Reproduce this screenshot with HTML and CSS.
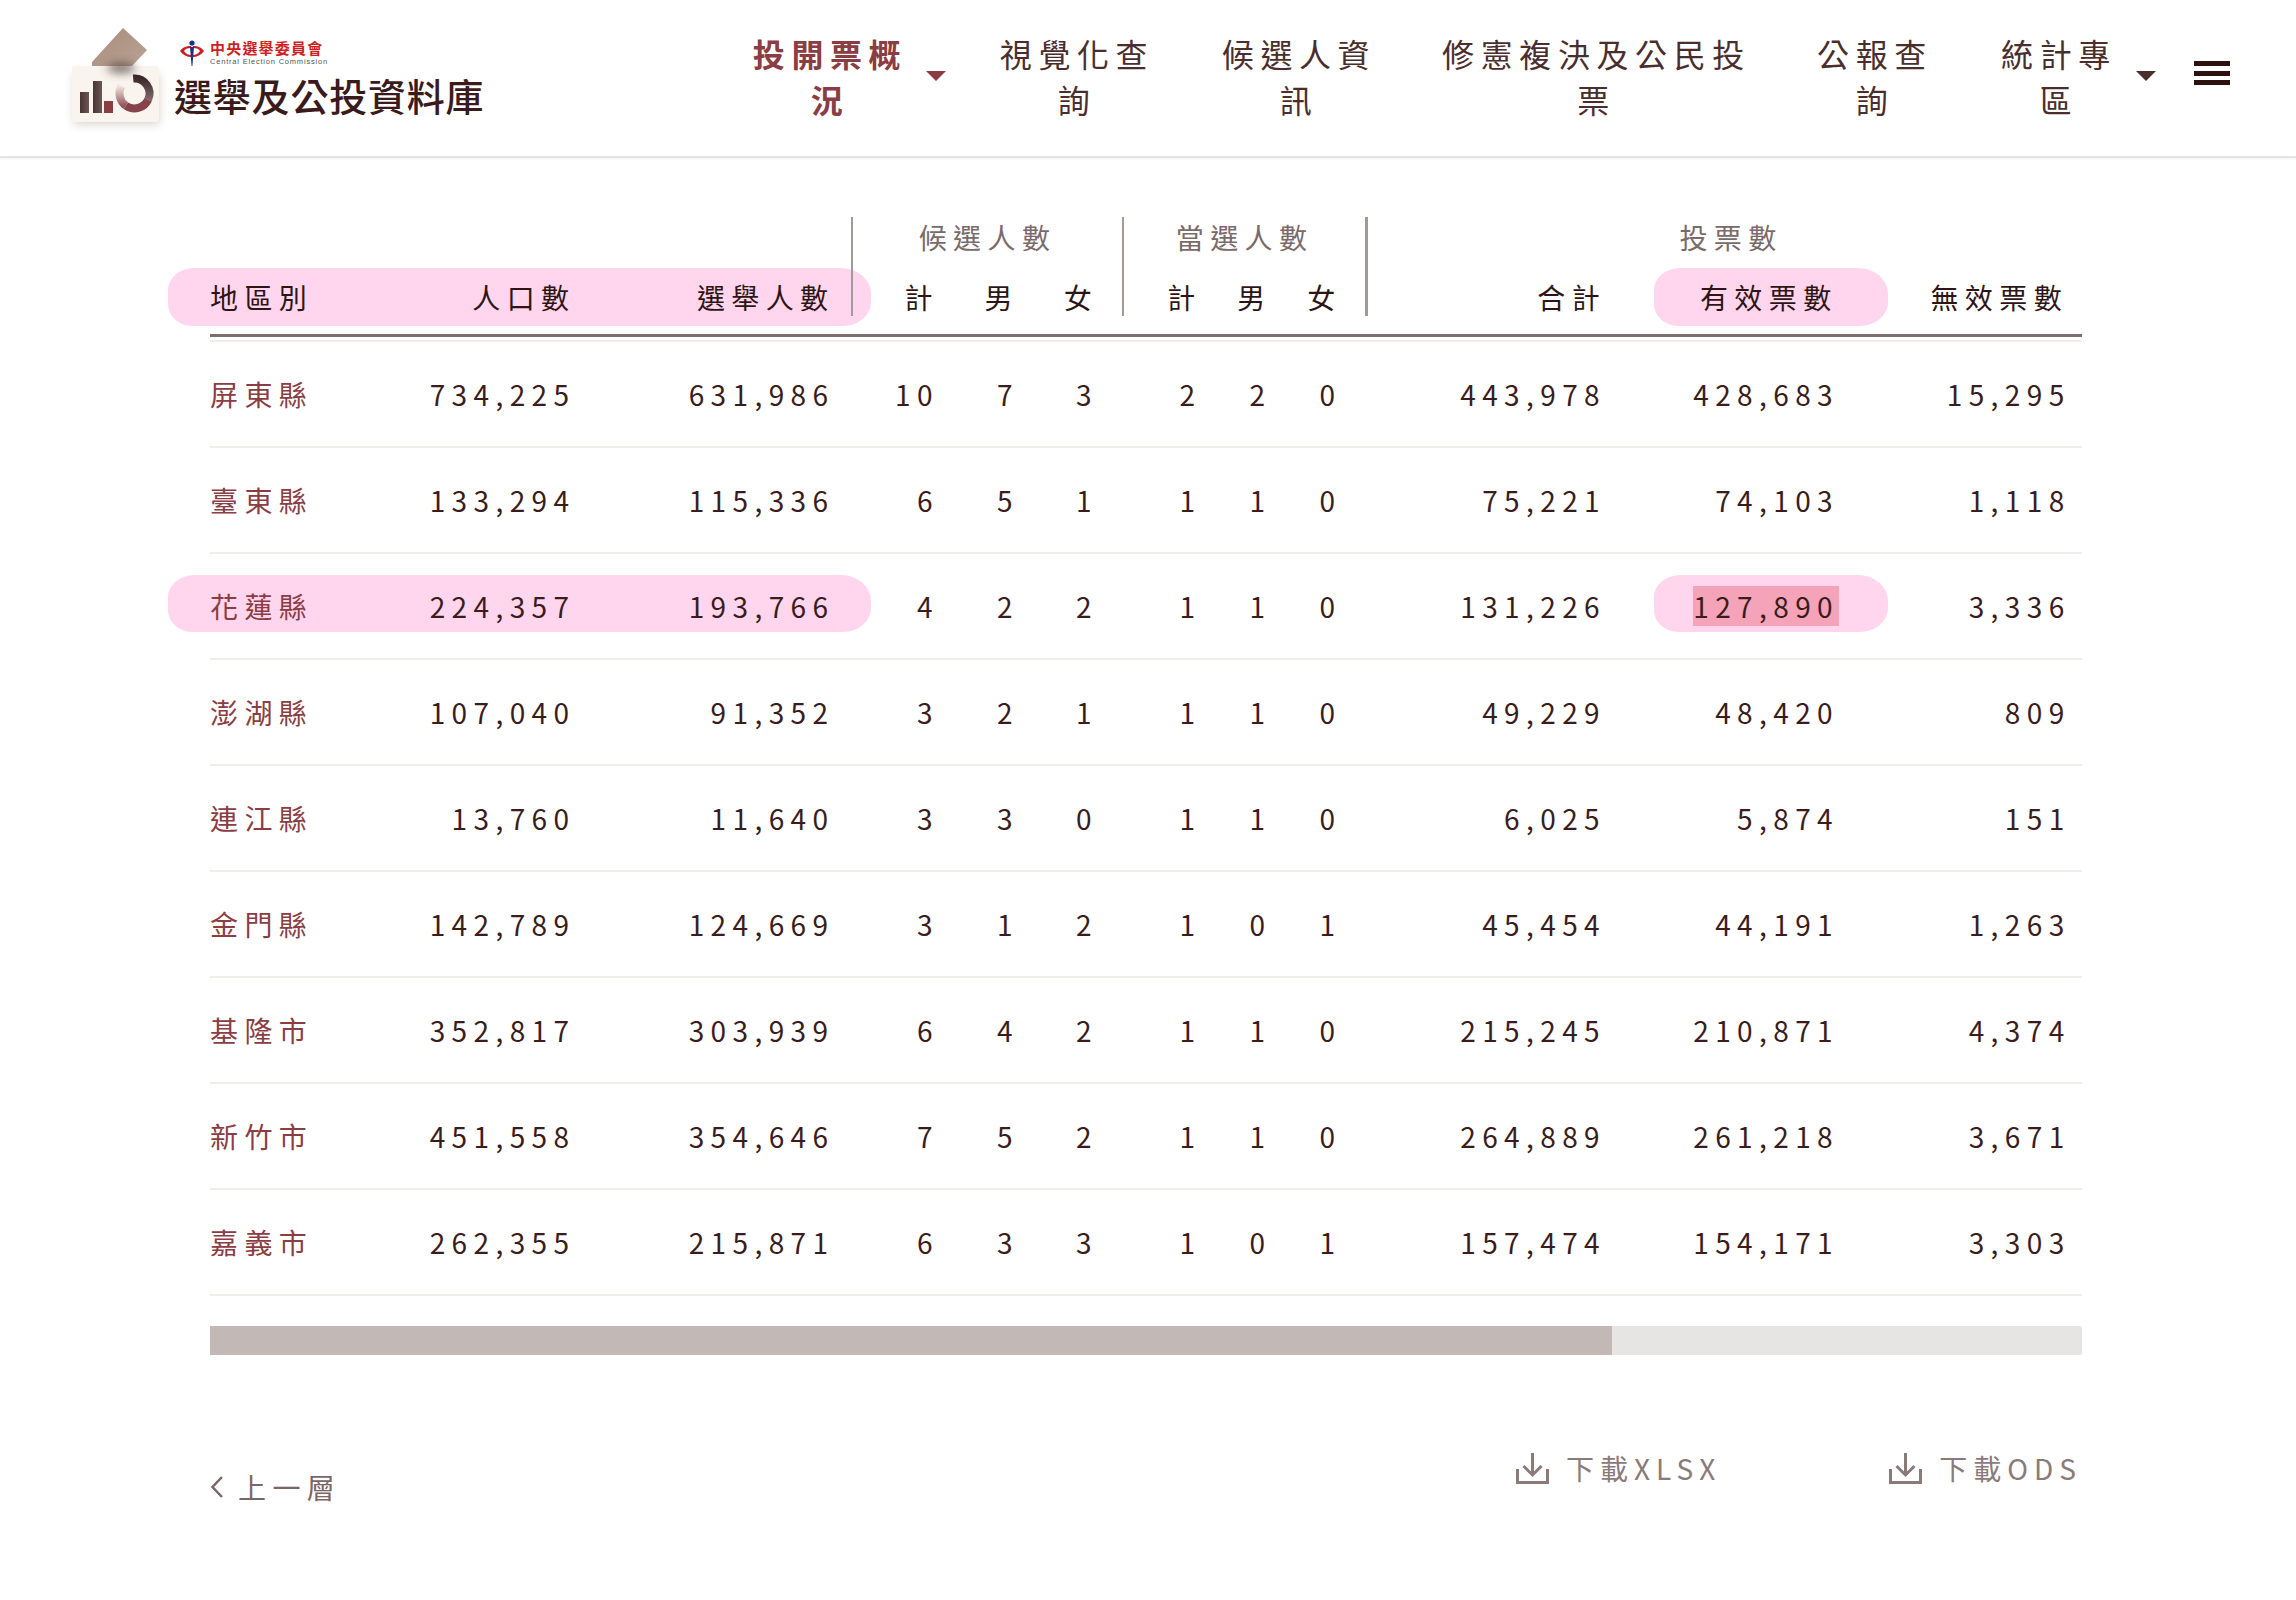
FILE: index.html
```html
<!DOCTYPE html>
<html lang="zh-TW">
<head>
    <meta charset="UTF-8">
    <meta name="viewport" content="width=device-width, initial-scale=1.0">
    <title>選舉及公投資料庫</title>
    <link rel="stylesheet" href="styles.css">
</head>
<body>
    <header class="site-header">
        <a class="logo" href="#">
            <svg class="logo-mark" width="108" height="112" viewBox="0 0 108 112">
                <defs>
                    <filter id="soft" x="-30%" y="-30%" width="160%" height="170%"><feGaussianBlur stdDeviation="5"/></filter>
                    <filter id="softer" x="-50%" y="-80%" width="200%" height="260%"><feGaussianBlur stdDeviation="5"/></filter>
                    <linearGradient id="paper" x1="0" y1="0" x2="1" y2="1">
                        <stop offset="0" stop-color="#a98c7c"/>
                        <stop offset="1" stop-color="#b9a294"/>
                    </linearGradient>
                    <linearGradient id="bar" x1="0" y1="0" x2="1" y2="0">
                        <stop offset="0" stop-color="#4a3535"/>
                        <stop offset="1" stop-color="#6b5656"/>
                    </linearGradient>
                    <linearGradient id="fade" x1="0" y1="1" x2="0" y2="0">
                        <stop offset="0" stop-color="#93555a"/>
                        <stop offset="1" stop-color="#f0e6df"/>
                    </linearGradient>
                    <linearGradient id="ring" x1="0" y1="0" x2="0" y2="1">
                        <stop offset="0" stop-color="#3d2828"/>
                        <stop offset="1" stop-color="#7d6c6c"/>
                    </linearGradient>
                </defs>
                <rect x="8" y="54" width="85" height="50" fill="#8a7a6a" opacity=".35" filter="url(#soft)"/>
                <path d="M57 8 L81 30 L66 46 L26 46 L26 42 Z" fill="url(#paper)"/>
                <rect x="6" y="46" width="87" height="56" rx="3" fill="#f9f4ee"/>
                <ellipse cx="55" cy="48" rx="14" ry="5" fill="#55443f" opacity=".8" filter="url(#softer)"/>
                <rect x="14" y="72" width="9" height="21" fill="url(#bar)"/>
                <rect x="27" y="61" width="9" height="32" fill="url(#bar)"/>
                <rect x="38" y="81" width="9" height="12" fill="#8a3d43"/>
                <path d="M67.200 58.600 A15 15 0 0 1 82.100 79.800" fill="none" stroke="url(#ring)" stroke-width="8"/>
                <path d="M82.100 79.800 A15 15 0 0 1 59.900 85.800" fill="none" stroke="#86444a" stroke-width="8"/>
                <path d="M59.900 85.800 A15 15 0 0 1 55.500 66" fill="none" stroke="url(#fade)" stroke-width="8"/>
            </svg>
            <div class="logo-text">
                <div class="cec">
                    <svg class="cec-mark" width="24" height="26" viewBox="0 0 24 26">
                        <path d="M0 11 C4 6 8 6 11 6 L11 8 C7 8 5 9 4 11 C6 14 9 15 11 15 L11 17 C7 17 3 15 0 11 Z" fill="#cc1f24"/>
                        <path d="M24 11 C20 6 16 6 13 6 L13 8 C17 8 19 9 20 11 C18 14 15 15 13 15 L13 17 C17 17 21 15 24 11 Z" fill="#cc1f24"/>
                        <circle cx="12" cy="3" r="2.600" fill="#1c2f80"/>
                        <path d="M10 7 L14 7 L12.400 26 L11.600 26 Z" fill="#1c2f80"/>
                    </svg>
                    <div class="cec-names">
                        <div class="cec-zh">中央選舉委員會</div>
                        <div class="cec-en">Central Election Commission</div>
                    </div>
                </div>
                <div class="logo-title">選舉及公投資料庫</div>
            </div>
        </a>
        <nav class="main-nav">
            <a class="nav-item active has-caret" href="#"><span class="nav-label w4">投開票概況</span><i class="caret"></i></a>
            <a class="nav-item" href="#"><span class="nav-label w4">視覺化查詢</span></a>
            <a class="nav-item" href="#"><span class="nav-label w4">候選人資訊</span></a>
            <a class="nav-item" href="#"><span class="nav-label w8">修憲複決及公民投票</span></a>
            <a class="nav-item" href="#"><span class="nav-label w3">公報查詢</span></a>
            <a class="nav-item has-caret" href="#"><span class="nav-label w3">統計專區</span><i class="caret"></i></a>
        </nav>
        <button class="burger" type="button" aria-label="選單"><span></span><span></span><span></span></button>
    </header>

    <main class="content">
        <div class="table-wrap">
            <table class="vote-table">
                <colgroup>
                    <col class="c-area">
                    <col class="c-pop">
                    <col class="c-voter">
                    <col class="c-a1">
                    <col class="c-a2">
                    <col class="c-a3">
                    <col class="c-b1">
                    <col class="c-b2">
                    <col class="c-b3">
                    <col class="c-total">
                    <col class="c-valid">
                    <col class="c-invalid">
                </colgroup>
                <thead>
                    <tr class="group-row">
                        <th colspan="3" class="split"></th>
                        <th colspan="3" class="split">候選人數</th>
                        <th colspan="3" class="split split-wide">當選人數</th>
                        <th colspan="3" class="group-votes">投票數</th>
                    </tr>
                    <tr class="col-row">
                        <th class="area pill-left">地區別</th>
                        <th>人口數</th>
                        <th class="end-voter">選舉人數</th>
                        <th>計</th>
                        <th>男</th>
                        <th class="end-a">女</th>
                        <th>計</th>
                        <th>男</th>
                        <th class="end-b">女</th>
                        <th>合計</th>
                        <th class="pill-right">有效票數</th>
                        <th class="end-row">無效票數</th>
                    </tr>
                    <tr class="rule-row"><th colspan="12"></th></tr>
                </thead>
                <tbody>
                    <tr><td class="area">屏東縣</td><td>734,225</td><td class="end-voter">631,986</td><td>10</td><td>7</td><td class="end-a">3</td><td>2</td><td>2</td><td class="end-b">0</td><td>443,978</td><td>428,683</td><td class="end-row">15,295</td></tr>
                    <tr><td class="area">臺東縣</td><td>133,294</td><td class="end-voter">115,336</td><td>6</td><td>5</td><td class="end-a">1</td><td>1</td><td>1</td><td class="end-b">0</td><td>75,221</td><td>74,103</td><td class="end-row">1,118</td></tr>
                    <tr><td class="area pill-left">花蓮縣</td><td>224,357</td><td class="end-voter">193,766</td><td>4</td><td>2</td><td class="end-a">2</td><td>1</td><td>1</td><td class="end-b">0</td><td>131,226</td><td class="pill-right"><span class="picked">127,890</span></td><td class="end-row">3,336</td></tr>
                    <tr><td class="area">澎湖縣</td><td>107,040</td><td class="end-voter">91,352</td><td>3</td><td>2</td><td class="end-a">1</td><td>1</td><td>1</td><td class="end-b">0</td><td>49,229</td><td>48,420</td><td class="end-row">809</td></tr>
                    <tr><td class="area">連江縣</td><td>13,760</td><td class="end-voter">11,640</td><td>3</td><td>3</td><td class="end-a">0</td><td>1</td><td>1</td><td class="end-b">0</td><td>6,025</td><td>5,874</td><td class="end-row">151</td></tr>
                    <tr><td class="area">金門縣</td><td>142,789</td><td class="end-voter">124,669</td><td>3</td><td>1</td><td class="end-a">2</td><td>1</td><td>0</td><td class="end-b">1</td><td>45,454</td><td>44,191</td><td class="end-row">1,263</td></tr>
                    <tr><td class="area">基隆市</td><td>352,817</td><td class="end-voter">303,939</td><td>6</td><td>4</td><td class="end-a">2</td><td>1</td><td>1</td><td class="end-b">0</td><td>215,245</td><td>210,871</td><td class="end-row">4,374</td></tr>
                    <tr><td class="area">新竹市</td><td>451,558</td><td class="end-voter">354,646</td><td>7</td><td>5</td><td class="end-a">2</td><td>1</td><td>1</td><td class="end-b">0</td><td>264,889</td><td>261,218</td><td class="end-row">3,671</td></tr>
                    <tr><td class="area">嘉義市</td><td>262,355</td><td class="end-voter">215,871</td><td>6</td><td>3</td><td class="end-a">3</td><td>1</td><td>0</td><td class="end-b">1</td><td>157,474</td><td>154,171</td><td class="end-row">3,303</td></tr>
                </tbody>
            </table>
        </div>
        <div class="scroll-track"><div class="scroll-thumb" style="width: 74.9%"></div></div>

        <div class="page-foot">
            <a class="back-link" href="#">
                <svg width="14" height="24" viewBox="0 0 14 24"><path d="M12 2 L2.500 12 L12 22" fill="none" stroke="#7a6666" stroke-width="2.500"/></svg>
                上一層
            </a>
            <div class="downloads">
                <a class="dl-link" href="#">
                    <svg width="33" height="32" viewBox="0 0 33 32"><path d="M1.500 17 V30.500 H31.500 V17 M16.500 1 V22 M7.500 14 L16.500 23 L25.500 14" fill="none" stroke="#8a7a7a" stroke-width="3"/></svg>
                    下載XLSX
                </a>
                <a class="dl-link" href="#">
                    <svg width="33" height="32" viewBox="0 0 33 32"><path d="M1.500 17 V30.500 H31.500 V17 M16.500 1 V22 M7.500 14 L16.500 23 L25.500 14" fill="none" stroke="#8a7a7a" stroke-width="3"/></svg>
                    下載ODS
                </a>
            </div>
        </div>
    </main>
</body>
</html>
```

FILE: styles.css
```css
* {
    box-sizing: border-box;
}
body {
    margin: 0;
    background-color: #fff;
    color: #3a1c1c;
    font-family: "Noto Sans CJK TC", "Noto Sans", sans-serif;
}
a {
    color: inherit;
    text-decoration: none;
}

/* header */
.site-header {
    height: 158px;
    display: flex;
    align-items: center;
    padding: 0 66px;
    border-bottom: 2px solid #e4e4e4;
    box-shadow: 0 1px 2px rgba(0, 0, 0, 0.05);
}
.logo {
    display: flex;
    align-items: flex-start;
    height: 156px;
}
.logo-mark {
    margin-top: 20px;
    flex: none;
}
.logo-text {
    margin-top: 40px;
    margin-left: 0;
}
.cec {
    display: flex;
    align-items: flex-start;
    margin-left: 6px;
    height: 33px;
}
.cec-names {
    margin-left: 6px;
}
.cec-zh {
    font-family: "Noto Sans CJK TC", serif;
    font-size: 15px;
    font-weight: 700;
    line-height: 16px;
    letter-spacing: 1.200px;
    color: #cc1f24;
}
.cec-en {
    font-family: "Liberation Sans", sans-serif;
    font-size: 7.500px;
    line-height: 9px;
    margin-top: 1px;
    letter-spacing: .800px;
    color: #555;
}
.logo-title {
    font-size: 38px;
    font-weight: 500;
    line-height: 44px;
    letter-spacing: .800px;
    color: #3a1a1a;
}
.main-nav {
    margin-left: auto;
    margin-top: -5px;
    display: flex;
    align-items: center;
    gap: 64px;
}
.nav-item {
    display: flex;
    align-items: center;
    color: #4a2e2e;
}
.nav-label {
    display: block;
    text-align: center;
    font-size: 32px;
    line-height: 46px;
    letter-spacing: 6.600px;
}
.w3 {
    width: 120px;
}
.w4 {
    width: 158px;
}
.w8 {
    width: 309px;
}
.nav-item.active {
    color: #8a3d43;
    font-weight: 700;
}
.caret {
    width: 0;
    height: 0;
    margin: 1px -12px 0 17px;
    border-left: 10px solid transparent;
    border-right: 10px solid transparent;
    border-top: 10px solid currentColor;
}
.burger {
    margin-left: 50px;
    width: 36px;
    height: 24px;
    padding: 0;
    border: 0;
    background: none;
    display: flex;
    flex-direction: column;
    justify-content: space-between;
    transform: translateY(-5px);
}
.burger span {
    height: 5px;
    background-color: #2e1010;
}

/* table */
.content {
    padding: 59px 214px 0 210px;
}
.table-wrap {
    position: relative;
    z-index: 0;
}
.vote-table {
    width: 1872px;
    table-layout: fixed;
    border-collapse: separate;
    border-spacing: 0;
    font-size: 28px;
    letter-spacing: 6.400px;
    color: #3a1c1c;
}
.c-area { width: 190px; }
.c-pop { width: 175.500px; }
.c-voter { width: 276.500px; }
.c-a1 { width: 87px; }
.c-a2 { width: 80px; }
.c-a3 { width: 104px; }
.c-b1 { width: 78.500px; }
.c-b2 { width: 70px; }
.c-b3 { width: 94.500px; }
.c-total { width: 240px; }
.c-valid { width: 233px; }
.c-invalid { width: 243px; }
.vote-table th,
.vote-table td {
    padding: 0;
    position: relative;
    text-align: right;
    font-weight: 400;
}
.group-row th {
    height: 50px;
    line-height: 40px;
    vertical-align: top;
    text-align: center;
    color: #7a6a6a;
}
.group-row .split::after {
    content: "";
    position: absolute;
    top: 0;
    right: -1px;
    width: 2px;
    height: 99px;
    background-color: #a09a98;
}
.group-row .split-wide::after {
    width: 3px;
    right: -2px;
}
.group-row .group-votes {
    padding-left: 14px;
}
.col-row th {
    height: 70px;
    line-height: 60px;
    vertical-align: top;
    border-bottom: 3px solid #7a6e6e;
    color: #2e1515;
}
.rule-row th {
    height: 5px;
    border-bottom: 2px solid #f0ece8;
}
.vote-table td {
    height: 106px;
    border-bottom: 2px solid #eeeeea;
    vertical-align: middle;
}
.vote-table .area {
    text-align: left;
}
td.area {
    color: #8a3d43;
}
.vote-table .end-voter {
    padding-right: 17.500px;
}
.vote-table .end-a {
    padding-right: 25px;
}
.vote-table .end-b {
    padding-right: 24.500px;
}
.vote-table .end-row {
    padding-right: 11.500px;
}
.vote-table th.end-row {
    padding-right: 14px;
}
.vote-table th.pill-right {
    padding-right: 1.500px;
}
.pill-left::before,
.pill-right::before {
    content: "";
    position: absolute;
    z-index: -1;
    background-color: #ffd6ee;
    border-radius: 26px 30px 28px 24px / 22px 26px 24px 22px;
}
.pill-left::before {
    left: -42px;
    width: 703px;
}
.pill-right::before {
    left: 48px;
    width: 234px;
}
th.pill-left::before,
th.pill-right::before {
    top: 1px;
    height: 58px;
}
td.pill-left::before,
td.pill-right::before {
    top: 21px;
    height: 57px;
}
.picked {
    background-color: #f5a3b8;
}

/* scroll bar */
.scroll-track {
    margin-top: 30px;
    height: 29px;
    background-color: #e6e5e3;
    border-radius: 0 2px 2px 0;
}
.scroll-thumb {
    height: 100%;
    background-color: #c2b8b6;
}

/* bottom links */
.page-foot {
    display: flex;
    justify-content: space-between;
    align-items: flex-start;
    margin-top: 93px;
    font-size: 28px;
    letter-spacing: 6.400px;
}
.back-link {
    display: flex;
    align-items: center;
    gap: 14px;
    margin-top: 19px;
    line-height: 40px;
    color: #7a6666;
}
.downloads {
    display: flex;
    gap: 168px;
    letter-spacing: 6px;
}
.dl-link {
    display: flex;
    align-items: center;
    gap: 17px;
    line-height: 40px;
    color: #8a7a7a;
}
```
